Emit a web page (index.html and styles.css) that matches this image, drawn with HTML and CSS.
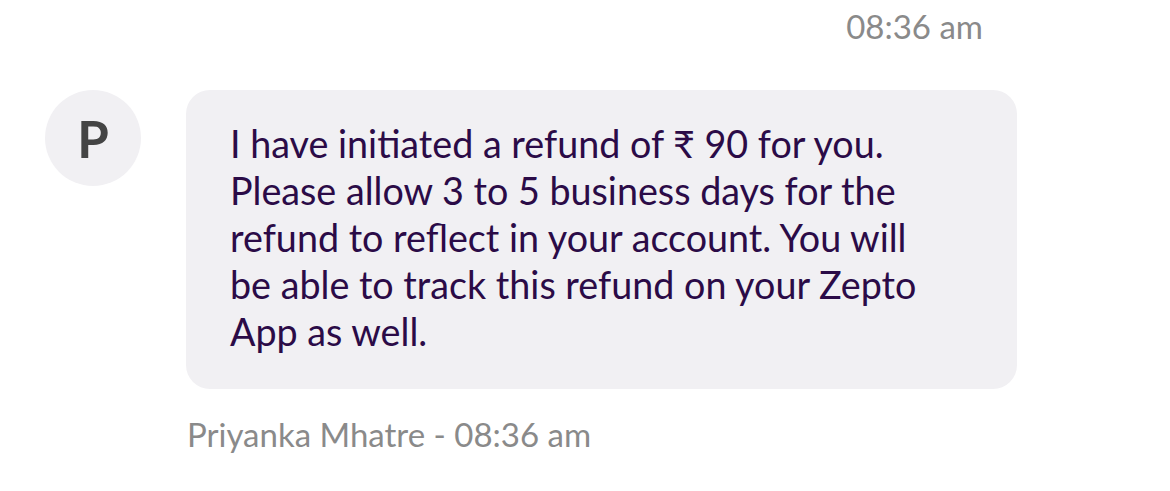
FILE: index.html
```html
<!DOCTYPE html>
<html lang="en">
	<head>
		<meta charset="UTF-8" />
		<meta name="viewport" content="width=device-width, initial-scale=1.0" />
		<link rel="stylesheet" href="styles.css">
		<title>Chat</title>
	</head>
	<body>
		<div class="chat">
			<div class="time-top">08:36 am</div>

			<div class="message">
				<div class="avatar">P</div>
				<div class="body">
					<div class="bubble">
						I have initiated a refund of ₹ 90 for you. Please allow 3 to 5 business days for the refund to reflect in your account. You will be able to track this refund on your Zepto App as well.
					</div>
					<div class="meta">Priyanka Mhatre - 08:36 am</div>
				</div>
			</div>
		</div>
	</body>
</html>
```

FILE: styles.css
```css
* {
	padding: 0;
	margin: 0;
	box-sizing: border-box;
}

body {
	background-color: #ffffff;
	font-family: Lato, "Noto Sans", sans-serif;
}

.chat {
	width: 1170px;
	height: 491px;
	padding: 6px 0 0 45px;
}

.time-top {
	text-align: right;
	padding-right: 187px;
	font-size: 33px;
	line-height: 40px;
	color: #8a8a8a;
}

.message {
	display: flex;
	flex-direction: row;
	align-items: flex-start;
	gap: 45px;
	margin-top: 44px;
}

.avatar {
	width: 96px;
	height: 96px;
	border-radius: 50%;
	background-color: #f1f0f3;
	color: #444444;
	font-size: 51px;
	font-weight: bold;
	display: flex;
	justify-content: center;
	align-items: center;
}

.bubble {
	width: 831px;
	background-color: #f1f0f3;
	border-radius: 24px;
	padding: 30px 67px 34px 44px;
	font-size: 37.7px;
	line-height: 47px;
	color: #2b0b47;
}

.meta {
	margin-top: 25px;
	padding-left: 1px;
	font-size: 33px;
	line-height: 40px;
	color: #8a8a8a;
}
```
